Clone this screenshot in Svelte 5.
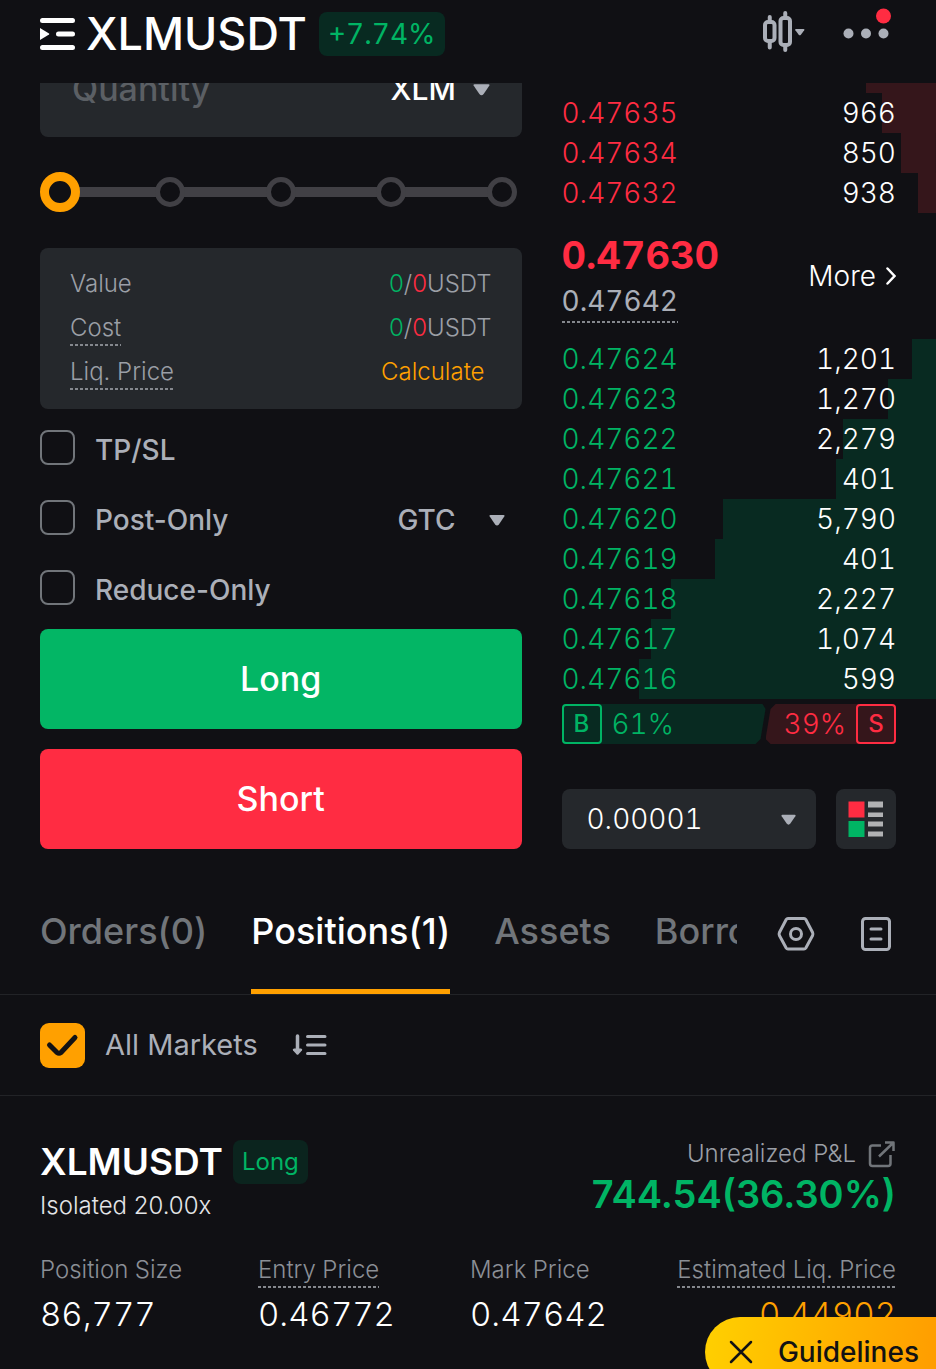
<script lang="ts">
	type Level = { price: string; size: string; depth: number };

	const asks: Level[] = [
		{ price: "0.47636", size: "818", depth: 18.7 },
		{ price: "0.47635", size: "966", depth: 14.4 },
		{ price: "0.47634", size: "850", depth: 9.3 },
		{ price: "0.47632", size: "938", depth: 4.9 },
	];

	const bids: Level[] = [
		{ price: "0.47624", size: "1,201", depth: 6.4 },
		{ price: "0.47623", size: "1,270", depth: 12.8 },
		{ price: "0.47622", size: "2,279", depth: 24.8 },
		{ price: "0.47621", size: "401", depth: 26.8 },
		{ price: "0.47620", size: "5,790", depth: 56.9 },
		{ price: "0.47619", size: "401", depth: 59 },
		{ price: "0.47618", size: "2,227", depth: 70.8 },
		{ price: "0.47617", size: "1,074", depth: 76.1 },
		{ price: "0.47616", size: "599", depth: 79.3 },
	];

	const tabs = ["Orders(0)", "Positions(1)", "Assets", "Borrowings"];

	let activeTab = $state("Positions(1)");
	let percent = $state(0);
	let quantity = $state("");
	let tpsl = $state(false);
	let postOnly = $state(false);
	let reduceOnly = $state(false);
	let allMarkets = $state(true);
	let showGuide = $state(true);
</script>

{#snippet caret(size: number)}
	<svg width={size} height={size} viewBox="0 0 16 16" aria-hidden="true">
		<path d="M1.5 3h13q1.6 0 .8 1.5l-5.3 7.8q-2 2.4-4 0L.7 4.5Q-.1 3 1.5 3z" fill="currentColor" />
	</svg>
{/snippet}

{#snippet book(levels: Level[], side: string)}
	<table class="book {side}">
		<tbody>
			{#each levels as level}
				<tr style:background-size="{level.depth}% 100%">
					<td class="price">{level.price}</td>
					<td class="size">{level.size}</td>
				</tr>
			{/each}
		</tbody>
	</table>
{/snippet}

<div class="app">
	<header class="topbar">
		<button class="pair" aria-label="Switch pair">
			<svg width="36" height="34" viewBox="0 0 36 34" aria-hidden="true">
				<path d="M2.5 3.5h30M18.5 17h14M2.5 30.5h30" stroke="#fff" stroke-width="5" stroke-linecap="round" />
				<path d="M0 11l9 5.5q.8.5 0 1L0 23z" fill="#fff" />
			</svg>
		</button>
		<h1>XLMUSDT</h1>
		<span class="change">+7.74%</span>
		<div class="tools">
			<button aria-label="Chart">
				<svg width="42" height="42" viewBox="0 0 42 42" aria-hidden="true">
					<g fill="none" stroke="#abafb8" stroke-width="4" stroke-linecap="round">
						<rect x="2" y="12" width="9.5" height="19" rx="3" />
						<rect x="17.5" y="8" width="9.5" height="27" rx="3" />
						<path d="M6.75 7v4M6.75 32v5.5M22.25 3v4M22.25 36v4" />
					</g>
					<path d="M33 19h7.5q1.5 0 .7 1.2l-3.3 4.5q-1.1 1.3-2.2 0l-3.3-4.5q-.8-1.2.6-1.2z" fill="#abafb8" />
				</svg>
			</button>
			<button class="more-menu" aria-label="More options">
				<svg width="48" height="32" viewBox="0 0 48 32" aria-hidden="true">
					<circle cx="5.5" cy="25.5" r="5" fill="#abafb8" />
					<circle cx="23" cy="25.5" r="5" fill="#abafb8" />
					<circle cx="40.5" cy="25.5" r="5" fill="#abafb8" />
					<circle cx="40.5" cy="8" r="7.5" fill="#ff2c42" />
				</svg>
			</button>
		</div>
	</header>

	<main>
		<div class="trade">
			<form class="order" onsubmit={(e) => e.preventDefault()}>
				<div class="quantity">
					<input type="text" placeholder="Quantity" aria-label="Quantity" bind:value={quantity} />
					<label class="picker unit">
						<select aria-label="Unit">
							<option>XLM</option>
						</select>
						{@render caret(17)}
					</label>
				</div>

				<div class="slider">
					<div class="marks">
						{#each [0, 25, 50, 75, 100] as stop (stop)}
							<span class="mark"></span>
						{/each}
					</div>
					<input type="range" min="0" max="100" step="25" aria-label="Order size percent" bind:value={percent} />
				</div>

				<dl class="summary">
					<div>
						<dt>Value</dt>
						<dd><span class="up">0</span>/<span class="down">0</span>USDT</dd>
					</div>
					<div>
						<dt><span class="hint">Cost</span></dt>
						<dd><span class="up">0</span>/<span class="down">0</span>USDT</dd>
					</div>
					<div>
						<dt><span class="hint">Liq. Price</span></dt>
						<dd><button type="button" class="calculate">Calculate</button></dd>
					</div>
				</dl>

				<div class="options">
					<div class="option">
						<label><input type="checkbox" bind:checked={tpsl} />TP/SL</label>
					</div>
					<div class="option">
						<label><input type="checkbox" bind:checked={postOnly} />Post-Only</label>
						<label class="picker tif">
							<select aria-label="Time in force">
								<option>GTC</option>
								<option>IOC</option>
								<option>FOK</option>
							</select>
							{@render caret(16)}
						</label>
					</div>
					<div class="option">
						<label><input type="checkbox" bind:checked={reduceOnly} />Reduce-Only</label>
					</div>
				</div>

				<div class="actions">
					<button class="long">Long</button>
					<button class="short">Short</button>
				</div>
			</form>

			<section class="depth">
				{@render book(asks, "asks")}

				<div class="last">
					<div class="prices">
						<strong>0.47630</strong>
						<span class="hint">0.47642</span>
					</div>
					<a href="#more">
						More
						<svg width="10" height="20" viewBox="0 0 10 20" aria-hidden="true">
							<path d="M1.5 2.5L8.5 10l-7 7.5" fill="none" stroke="#fff" stroke-width="2.5" stroke-linecap="round" />
						</svg>
					</a>
				</div>

				{@render book(bids, "bids")}

				<div class="ratio">
					<div class="buy" style:flex-grow={61}><b>B</b>61%</div>
					<div class="sell" style:flex-grow={39}>39%<b>S</b></div>
				</div>

				<div class="book-controls">
					<label class="picker tick">
						<select aria-label="Price step">
							<option>0.00001</option>
							<option>0.0001</option>
							<option>0.001</option>
						</select>
						{@render caret(15)}
					</label>
					<button aria-label="Order book layout">
						<svg width="36" height="36" viewBox="0 0 36 36" aria-hidden="true">
							<path d="M.5.5h16v16H.5z" fill="#ff2c42" />
							<path d="M.5 20h16v16H.5z" fill="#00b464" />
							<path d="M20 .5h15v6H20zM20 11.5h15V16H20zM20 20.5h15v5H20zM20 30.5h15v5H20z" fill="#b1b2b4" />
						</svg>
					</button>
				</div>
			</section>
		</div>

		<nav class="tabs">
			<div class="tab-list" role="tablist">
				{#each tabs as tab}
					<button role="tab" aria-selected={activeTab === tab} onclick={() => (activeTab = tab)}>{tab}</button>
				{/each}
			</div>
			<div class="tab-tools">
				<button aria-label="Settings">
					<svg width="38" height="36" viewBox="0 0 38 36" aria-hidden="true">
						<g fill="none" stroke="#abafb8" stroke-width="3" stroke-linejoin="round">
							<path d="M11 2.5h16q1.2 0 1.8 1l6.8 13q.6 1.500 0 3l-6.8 12.5q-.6 1-1.8 1H11q-1.2 0-1.8-1L2.4 19.5q-.6-1.5 0-3l6.8-13q.6-1 1.8-1z" />
							<circle cx="19" cy="18" r="5.5" />
						</g>
					</svg>
				</button>
				<button aria-label="History">
					<svg width="32" height="36" viewBox="0 0 32 36" aria-hidden="true">
						<rect x="2.5" y="2.5" width="27" height="31" rx="3" fill="none" stroke="#abafb8" stroke-width="3" />
						<path d="M11 13h10M11 23h10" stroke="#abafb8" stroke-width="3" stroke-linecap="round" />
					</svg>
				</button>
			</div>
		</nav>

		<div class="filter">
			<label><input type="checkbox" bind:checked={allMarkets} />All Markets</label>
			<button aria-label="Sort positions">
				<svg width="36" height="24" viewBox="0 0 36 24" aria-hidden="true">
					<g fill="none" stroke="#abafb8" stroke-width="3" stroke-linecap="round">
						<path d="M5.5 3v16" stroke-width="3.5" />
						<path d="M15.5 3.5H33M15.5 12H33M15.5 20.5H33" />
					</g>
					<path d="M2 15.5h7q2 .5.9 2l-3.6 4q-.8.6-1.6 0l-3.6-4q-1.1-1.5.9-2z" fill="#abafb8" />
				</svg>
			</button>
		</div>

		<article class="position">
			<div class="position-head">
				<div>
					<div class="symbol">
						<h2>XLMUSDT</h2>
						<span class="side">Long</span>
					</div>
					<p class="margin">Isolated 20.00x</p>
				</div>
				<div class="pnl">
					<p>
						Unrealized P&amp;L
						<button aria-label="Share">
							<svg width="28" height="28" viewBox="0 0 28 28" aria-hidden="true">
								<g fill="none" stroke="#71757a" stroke-width="2.5" stroke-linejoin="round">
									<path d="M13 5.5H4.5Q2 5.5 2 8v15.500Q2 26 4.5 26H20q2.5 0 2.5-2.5V15" />
									<path d="M11 16.5L25 3M17 2.5h8.5V11" />
								</g>
							</svg>
						</button>
					</p>
					<strong>744.54(36.30%)</strong>
				</div>
			</div>

			<dl class="stats">
				<div>
					<dt>Position Size</dt>
					<dd>86,777</dd>
				</div>
				<div>
					<dt><span class="hint">Entry Price</span></dt>
					<dd>0.46772</dd>
				</div>
				<div>
					<dt>Mark Price</dt>
					<dd>0.47642</dd>
				</div>
				<div class="liq">
					<dt><span class="hint">Estimated Liq. Price</span></dt>
					<dd>0.44902</dd>
				</div>
			</dl>
		</article>
	</main>

	{#if showGuide}
		<div class="guide">
			<button aria-label="Close" onclick={() => (showGuide = false)}>
				<svg width="24" height="24" viewBox="0 0 24 24" aria-hidden="true">
					<path d="M2 2l20 20M22 2L2 22" stroke="#121214" stroke-width="2.5" stroke-linecap="round" />
				</svg>
			</button>
			<a href="#guidelines">Guidelines</a>
		</div>
	{/if}
</div>

<style>
	:global(body) {
		background: #101014;
	}

	.app {
		--card: #25282c;
		--text: #abafb8;
		--dim: #71757a;
		--green: #00b464;
		--green-bg: #082a21;
		--red: #ff2c42;
		--red-bg: #35161b;
		--orange: #ffa000;
		min-height: 100vh;
		overflow: hidden;
		box-sizing: border-box;
		background: #101014;
		color: #fff;
		font-family: Inter, "Noto Sans", sans-serif;
		font-size: 28px;
		line-height: 40px;
	}

	.app * {
		box-sizing: border-box;
	}

	h1,
	h2,
	p,
	dl,
	dd {
		margin: 0;
	}

	button,
	input,
	select {
		padding: 0;
		border: 0;
		border-radius: 0;
		background: none;
		color: inherit;
		font: inherit;
	}

	button,
	select {
		cursor: pointer;
	}

	a {
		color: inherit;
		text-decoration: none;
	}

	svg {
		display: block;
		flex: none;
	}

	.change,
	.depth,
	.tick select,
	.stats {
		font-variant-numeric: tabular-nums;
	}

	.up {
		color: var(--green);
	}

	.down {
		color: var(--red);
	}

	.hint {
		display: inline-block;
		background: repeating-linear-gradient(90deg, #85888e 0 3px, transparent 3px 5px) bottom / 100% 2px no-repeat;
	}

	.topbar {
		position: relative;
		z-index: 1;
		display: flex;
		align-items: center;
		height: 83px;
		padding: 0 45px 16px 40px;
		background: #101014;
	}

	.topbar h1 {
		margin-left: 10px;
		font-size: 45px;
		font-weight: 500;
	}

	.change {
		margin-left: 12px;
		padding: 0 9px;
		border-radius: 8px;
		background: var(--green-bg);
		color: var(--green);
		line-height: 44px;
	}

	.tools {
		display: flex;
		align-items: center;
		gap: 38px;
		margin-left: auto;
		margin-top: -6px;
	}

	.more-menu {
		margin-bottom: 14px;
	}

	.trade {
		display: grid;
		grid-template-columns: minmax(0, 9fr) minmax(0, 7fr);
		column-gap: 40px;
		padding-left: 40px;
	}

	/* form and book are scrolled under the top bar */
	.order {
		margin-top: -42px;
	}

	.depth {
		margin-top: -30px;
	}

	.quantity {
		display: flex;
		align-items: center;
		height: 96px;
		padding: 0 32px;
		border-radius: 8px;
		background: var(--card);
	}

	.quantity input {
		flex: 1;
		min-width: 0;
		font-size: 34px;
		font-weight: 500;
	}

	.quantity input::placeholder {
		color: #5b5f64;
		opacity: 1;
	}

	.picker {
		display: flex;
		align-items: center;
	}

	.picker select {
		appearance: none;
	}

	.unit {
		gap: 16px;
		color: var(--text);
	}

	.unit select {
		color: #fff;
		font-size: 30px;
		font-weight: 500;
	}

	.slider {
		position: relative;
		height: 40px;
		margin: 35px 0 36px;
	}

	.marks {
		display: flex;
		justify-content: space-between;
		align-items: center;
		height: 40px;
		padding: 0 5px;
		background: linear-gradient(#414045, #414045) center / calc(100% - 40px) 10px no-repeat;
	}

	.mark {
		width: 30px;
		height: 30px;
		border: 5px solid #414045;
		border-radius: 50%;
		background: #101014;
	}

	.slider input {
		position: absolute;
		inset: 0;
		width: 100%;
		height: 40px;
		margin: 0;
		appearance: none;
	}

	.slider input::-webkit-slider-thumb {
		appearance: none;
		width: 40px;
		height: 40px;
		border: 9px solid var(--orange);
		border-radius: 50%;
		background: #101014;
	}

	.summary {
		padding: 14px 30px 15px;
		border-radius: 8px;
		background: var(--card);
		color: #9b9fa6;
		font-size: 24px;
	}

	.summary div {
		display: flex;
		justify-content: space-between;
		align-items: center;
		height: 44px;
	}

	.summary dt,
	.summary dd {
		font-weight: 300;
	}

	.summary .hint,
	.stats .hint {
		line-height: 36px;
	}

	.calculate {
		margin-right: 7px;
		color: var(--orange);
	}

	.options {
		margin: 3px 0 7px;
		color: var(--text);
		font-weight: 500;
	}

	.option {
		display: flex;
		justify-content: space-between;
		align-items: flex-start;
		height: 70px;
		padding-top: 18px;
	}

	.option label:first-child {
		display: flex;
		align-items: flex-start;
		gap: 20px;
	}

	.option input {
		appearance: none;
		width: 35px;
		height: 35px;
		margin: 0;
		border: 2px solid var(--dim);
		border-radius: 8px;
	}

	.option input:checked {
		border-color: var(--orange);
		background: var(--orange);
	}

	.tif {
		gap: 32px;
		padding-right: 17px;
	}

	.actions {
		display: grid;
		gap: 20px;
	}

	.actions button {
		height: 100px;
		border-radius: 8px;
		font-size: 34px;
		font-weight: 500;
	}

	.long {
		background: #03b665;
	}

	.short {
		background: var(--red);
	}

	.book {
		width: 100%;
		border-collapse: collapse;
		font-weight: 300;
	}

	.book tr {
		height: 40px;
		background-position: right;
		background-repeat: no-repeat;
	}

	.book td {
		padding: 0;
	}

	.asks tr {
		background-image: linear-gradient(var(--red-bg), var(--red-bg));
	}

	.bids tr {
		background-image: linear-gradient(var(--green-bg), var(--green-bg));
	}

	.asks .price {
		color: var(--red);
	}

	.bids .price {
		color: var(--green);
	}

	.book .size {
		padding-right: 40px;
		text-align: right;
	}

	.last {
		display: flex;
		justify-content: space-between;
		align-items: center;
		height: 126px;
		padding-right: 40px;
	}

	.prices {
		display: grid;
		justify-items: start;
		padding-top: 2px;
	}

	.prices strong {
		color: var(--red);
		font-size: 38px;
		font-weight: 700;
		line-height: 48px;
	}

	.prices .hint {
		color: var(--text);
		line-height: 44px;
	}

	.last a {
		display: flex;
		align-items: center;
		gap: 10px;
		font-weight: 300;
	}

	.ratio {
		display: flex;
		margin: 5px 40px 0 0;
		font-weight: 300;
	}

	.ratio div {
		display: flex;
		align-items: center;
		flex-basis: 0;
		gap: 10px;
		height: 40px;
	}

	.ratio b {
		width: 40px;
		border: 2px solid;
		border-radius: 4px;
		font-size: 24px;
		font-weight: 500;
		line-height: 36px;
		text-align: center;
	}

	.buy {
		border-radius: 4px;
		background: var(--green-bg);
		color: var(--green);
		clip-path: polygon(0 0, calc(100% - 3px) 0, 100% 5px, calc(100% - 5px) 35px, calc(100% - 10px) 100%, 0 100%);
	}

	.sell {
		justify-content: flex-end;
		border-radius: 4px;
		background: var(--red-bg);
		color: var(--red);
		clip-path: polygon(10px 0, 100% 0, 100% 100%, 5px 100%, 0 35px, 5px 5px);
	}

	.book-controls {
		display: flex;
		gap: 20px;
		margin: 45px 40px 0 0;
	}

	.tick {
		flex: 1;
		height: 60px;
		padding: 0 20px 0 25px;
		border-radius: 8px;
		background: var(--card);
		color: var(--text);
	}

	.tick select {
		flex: 1;
		min-width: 0;
		color: #fff;
		font-weight: 300;
	}

	.book-controls button {
		display: grid;
		place-items: center;
		width: 60px;
		height: 60px;
		border-radius: 8px;
		background: var(--card);
	}

	.tabs {
		display: flex;
		justify-content: space-between;
		height: 146px;
		padding: 0 44px 0 40px;
		border-bottom: 1px solid #222327;
	}

	.tab-list {
		display: flex;
		flex: 1;
		gap: 44px;
		min-width: 0;
		margin-right: 40px;
		overflow: hidden;
		color: var(--dim);
		font-size: 36px;
		font-weight: 500;
	}

	.tab-list button {
		padding: 24px 0 0;
		border-bottom: 5px solid transparent;
	}

	.tab-list button[aria-selected="true"] {
		border-color: var(--orange);
		color: #fff;
	}

	.tab-tools {
		display: flex;
		align-items: center;
		gap: 45px;
		padding-top: 24px;
	}

	.filter {
		display: flex;
		align-items: center;
		gap: 34px;
		height: 101px;
		padding: 0 40px;
		border-bottom: 1px solid #222327;
		color: var(--text);
		font-size: 29px;
	}

	.filter label {
		display: flex;
		align-items: center;
		gap: 20px;
	}

	.filter input {
		appearance: none;
		width: 45px;
		height: 45px;
		margin: 0;
		border: 2px solid var(--dim);
		border-radius: 9px;
	}

	.filter input:checked {
		border: 0;
		background: var(--orange)
			url("data:image/svg+xml,%3Csvg xmlns='http://www.w3.org/2000/svg' viewBox='0 0 45 45'%3E%3Cpath d='M9.5 22l7.5 7.5q2 1.5 4 0L35 14.5' fill='none' stroke='%23121214' stroke-width='5' stroke-linecap='round' stroke-linejoin='round'/%3E%3C/svg%3E");
	}

	.position {
		padding: 44px 40px 32px;
	}

	.position-head {
		display: flex;
		justify-content: space-between;
	}

	.symbol {
		display: flex;
		align-items: center;
		gap: 10px;
	}

	.symbol h2 {
		font-size: 37px;
		font-weight: 600;
	}

	.side {
		padding: 0 9px;
		border-radius: 8px;
		background: #0b241e;
		color: var(--green);
		font-size: 24px;
		line-height: 44px;
	}

	.margin {
		margin-top: 2px;
		color: #e4e5e8;
		font-size: 24px;
		font-weight: 300;
	}

	.pnl {
		text-align: right;
	}

	.pnl p {
		display: flex;
		justify-content: flex-end;
		align-items: center;
		gap: 12px;
		height: 28px;
		color: #9b9fa6;
		font-size: 24px;
		font-weight: 300;
	}

	.pnl strong {
		display: block;
		margin-top: 4px;
		color: var(--green);
		font-size: 38px;
		font-weight: 600;
		line-height: 44px;
	}

	.stats {
		display: grid;
		grid-template-columns: 218fr 212fr 180fr 246fr;
		margin-top: 24px;
	}

	.stats dt {
		height: 40px;
		color: #8b8f96;
		font-size: 24px;
		font-weight: 300;
	}

	.stats dd {
		margin-top: 4px;
		font-size: 33px;
		font-weight: 300;
	}

	.liq {
		text-align: right;
	}

	.liq dd {
		color: var(--orange);
	}

	/* floating help pill, partly below the fold */
	.guide {
		position: fixed;
		right: 0;
		bottom: -18px;
		display: flex;
		align-items: center;
		gap: 25px;
		height: 70px;
		padding: 0 17px 0 24px;
		border-radius: 35px 0 0 35px;
		background: linear-gradient(100deg, #ffd000, #ff9c00);
		color: #121214;
		font-weight: 500;
	}
</style>
